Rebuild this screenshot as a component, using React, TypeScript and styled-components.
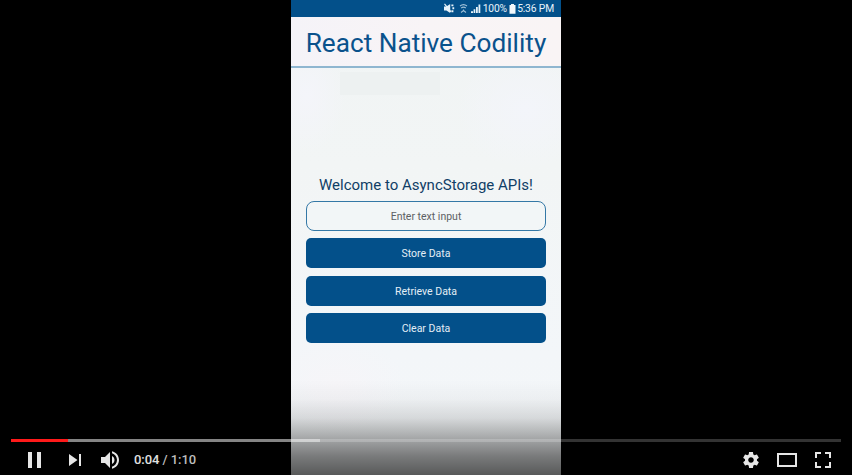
import React from "react";
import styled, { createGlobalStyle } from "styled-components";

const GlobalStyle = createGlobalStyle`
  * { box-sizing: border-box; }
  body { margin: 0; background: #000; font-family: Roboto, "Liberation Sans", sans-serif; }
`;

const Player = styled.div`
  position: relative;
  width: 852px;
  height: 475px;
  overflow: hidden;
  background: #000;
  display: flex;
  justify-content: center;
`;

const Phone = styled.main`
  width: 270px;
  height: 475px;
  display: flex;
  flex-direction: column;
  background:
    linear-gradient(#edf1f1, #edf1f1) 49px 72px / 100px 23px no-repeat,
    radial-gradient(ellipse 70px 60px at 235px 110px, #f3f5fa, rgba(243, 245, 250, 0)),
    radial-gradient(ellipse 40px 60px at 15px 95px, #f4f5fa, rgba(244, 245, 250, 0)),
    radial-gradient(ellipse 70px 50px at 45px 385px, #f6f5f8, rgba(246, 245, 248, 0)),
    linear-gradient(#f0f4f4, #f2f5f5 35%, #f3f6f9 75%, #f4f7f8);
`;

const StatusBar = styled.div`
  height: 17px;
  flex: none;
  display: flex;
  align-items: center;
  justify-content: flex-end;
  padding: 0 7px 0 0;
  background: #03508a;
  color: #e8f3fa;
  font-size: 10.3px;
  line-height: 17px;
  white-space: nowrap;
`;

const StatusText = styled.span<{ $width: number }>`
  width: ${(p) => p.$width}px;
  display: flex;
  justify-content: flex-end;
  letter-spacing: -0.15px;
`;

const StatusIcons = styled.svg`
  display: block;
  flex: none;
  margin-right: 2.5px;
`;

const Battery = styled.svg`
  display: block;
  flex: none;
  margin: 0 2.5px 0 1.5px;
`;

const Header = styled.header`
  height: 51px;
  flex: none;
  padding-top: 3px;
  display: flex;
  align-items: center;
  justify-content: center;
  background: linear-gradient(90deg, #f5f3f8, #f8f4f6 50%, #f9f4f5);
  border-bottom: 2px solid #8fb6d0;
`;

const Title = styled.h1`
  margin: 0;
  font-size: 26.2px;
  line-height: 32px;
  font-weight: 400;
  color: #0a528c;
  white-space: nowrap;
`;

const Form = styled.section`
  padding: 107px 15px 0;
  display: flex;
  flex-direction: column;
  gap: 7.4px;
`;

const Welcome = styled.h2`
  margin: 0 0 -1.4px;
  height: 20px;
  font-size: 15px;
  line-height: 20px;
  font-weight: 400;
  color: #103e66;
  text-align: center;
  white-space: nowrap;
`;

const Field = styled.div`
  height: 30px;
  border: 1px solid #3478a6;
  border-radius: 8px;
  background: #f2f6f7;
  color: #5d6164;
  font-size: 10.5px;
  line-height: 30px;
  text-align: center;
`;

const Action = styled.button`
  height: 30px;
  border: 0;
  border-radius: 5px;
  padding: 0;
  background: #03508a;
  color: #e4eef6;
  font: 400 10.5px/31px Roboto, sans-serif;
  text-align: center;
`;

/* The playback chrome lies over the video frame. */
const Chrome = styled.div`
  position: absolute;
  inset: auto 0 0;
  height: 95px;
  display: flex;
  flex-direction: column;
  justify-content: flex-end;
  background: linear-gradient(
    rgba(0, 0, 0, 0),
    rgba(0, 0, 0, 0.03) 20%,
    rgba(0, 0, 0, 0.12) 40%,
    rgba(0, 0, 0, 0.33) 62%,
    rgba(0, 0, 0, 0.5) 80%,
    rgba(0, 0, 0, 0.64)
  );
`;

const Track = styled.div`
  height: 3px;
  margin: 0 11px;
  display: flex;
  background: rgba(255, 255, 255, 0.2);
`;

const Segment = styled.div<{ $width: number; $color: string }>`
  width: ${(p) => p.$width}px;
  background: ${(p) => p.$color};
`;

const Controls = styled.div`
  height: 33px;
  display: flex;
  align-items: flex-start;
  padding: 0 11px 0 16px;
`;

const ControlIcon = styled.svg<{ $gap?: number }>`
  display: block;
  flex: none;
  width: 36px;
  height: 36px;
  margin-left: ${(p) => p.$gap ?? 0}px;
  fill: #e6e6e6;
`;

const Time = styled.div`
  margin-left: 5px;
  font-size: 13px;
  font-weight: 500;
  letter-spacing: -0.06px;
  line-height: 35px;
  color: #bdbdbd;
  white-space: pre;
`;

const Current = styled.span`
  color: #e0e0e0;
`;

const Spacer = styled.div`
  flex: 1;
`;

function Icon({ d, gap }: { d: string; gap?: number }) {
  return (
    <ControlIcon viewBox="0 0 36 36" $gap={gap}>
      <path fillRule="evenodd" d={d} />
    </ControlIcon>
  );
}

const icons = {
  pause: "M12 26h4V10h-4zM21 26h4V10h-4z",
  next: "M12 24l8.5-6L12 12zM22 12v12h2V12z",
  volume:
    "M8 21h4l5 5V10l-5 5H8zM19 14v8c1.48-.68 2.5-2.23 2.5-4S20.48 14.74 19 14zM19 11.29c2.89.86 5 3.54 5 6.71s-2.11 5.85-5 6.71v2.06c4.01-.91 7-4.49 7-8.77s-2.99-7.86-7-8.77z",
  settings:
    "m 23.94,18.78 c .03,-0.25 .05,-0.51 .05,-0.78 0,-0.27 -0.02,-0.52 -0.05,-0.78 l 1.68,-1.32 c .15,-0.12 .19,-0.33 .09,-0.51 l -1.6,-2.76 c -0.09,-0.17 -0.31,-0.24 -0.48,-0.17 l -1.99,.8 c -0.41,-0.32 -0.86,-0.58 -1.35,-0.78 l -0.30,-2.12 c -0.02,-0.19 -0.19,-0.33 -0.39,-0.33 l -3.2,0 c -0.2,0 -0.36,.14 -0.39,.33 l -0.30,2.12 c -0.48,.2 -0.93,.47 -1.35,.78 l -1.99,-0.8 c -0.18,-0.07 -0.39,0 -0.48,.17 l -1.6,2.76 c -0.10,.17 -0.05,.39 .09,.51 l 1.68,1.32 c -0.03,.25 -0.05,.52 -0.05,.78 0,.26 .02,.52 .05,.78 l -1.68,1.32 c -0.15,.12 -0.19,.33 -0.09,.51 l 1.6,2.76 c .09,.17 .31,.24 .48,.17 l 1.99,-0.8 c .41,.32 .86,.58 1.35,.78 l .30,2.12 c .02,.19 .19,.33 .39,.33 l 3.2,0 c .2,0 .36,-0.14 .39,-0.33 l .30,-2.12 c .48,-0.2 .93,-0.47 1.35,-0.78 l 1.99,.8 c .18,.07 .39,0 .48,-0.17 l 1.6,-2.76 c .09,-0.17 .05,-0.39 -0.09,-0.51 l -1.68,-1.32 z m -5.94,2.01 c -1.54,0 -2.8,-1.25 -2.8,-2.8 0,-1.54 1.25,-2.8 2.8,-2.8 1.54,0 2.8,1.25 2.8,2.8 0,1.54 -1.25,2.8 -2.8,2.8 z",
  theater: "M8 11h20v14H8zM10 13v10h16V13z",
  fullscreen:
    "M10 16h2v-4h4v-2h-6zM20 10v2h4v4h2v-6zM24 24h-4v2h6v-6h-2zM12 20h-2v6h6v-2h-4z",
};

export default function App() {
  return (
    <>
      <GlobalStyle />
      <Player>
        <Phone>
          <StatusBar>
            <StatusIcons width="37" height="11" viewBox="0 0 37 11">
              <g fill="#e8f3fa">
                <path d="M0 3.5h2.4L6.2 1v9L2.4 7.4H0z" />
                <path d="M7.4 1.5h2v1.7h-2zM8.4 4.2h1.8v2H8.4zM7.4 7.2h2v2h-2z" />
                <path d="M27 10h2V8.3h-2zM29.6 10h1.7V6.3h-1.7zM32 10h1.8V4H32zM34.5 10h1.8V1.5h-1.8z" />
              </g>
              <path d="M.5 .8l6.5 8" stroke="#e8f3fa" strokeWidth="1.2" />
              <g fill="none" stroke="#9fc0d8" strokeWidth="1.1">
                <path d="M16 3c2-1.6 5-1.6 7 0M17.2 5c1.3-1 3.3-1 4.6 0M19.5 6.5v1M17 9.5l2.5-2 2.5 2" />
              </g>
            </StatusIcons>
            <StatusText $width={24}>100%</StatusText>
            <Battery width="7" height="10" viewBox="0 0 7 10">
              <path d="M2 0h3v1h1.5v8.8H.5V1H2z" fill="#f2f8fc" />
            </Battery>
            <StatusText $width={36}>5:36 PM</StatusText>
          </StatusBar>
          <Header>
            <Title>React Native Codility</Title>
          </Header>
          <Form>
            <Welcome>Welcome to AsyncStorage APIs!</Welcome>
            <Field>Enter text input</Field>
            <Action>Store Data</Action>
            <Action>Retrieve Data</Action>
            <Action>Clear Data</Action>
          </Form>
        </Phone>
        <Chrome>
          <Track>
            <Segment $width={56.5} $color="#ff1a1a" />
            <Segment $width={252.5} $color="rgba(255, 255, 255, 0.4)" />
          </Track>
          <Controls>
            <Icon d={icons.pause} />
            <Icon d={icons.next} gap={5} />
            <Icon d={icons.volume} />
            <Time>
              <Current>0:04</Current> / 1:10
            </Time>
            <Spacer />
            <Icon d={icons.settings} />
            <Icon d={icons.theater} />
            <Icon d={icons.fullscreen} />
          </Controls>
        </Chrome>
      </Player>
    </>
  );
}
